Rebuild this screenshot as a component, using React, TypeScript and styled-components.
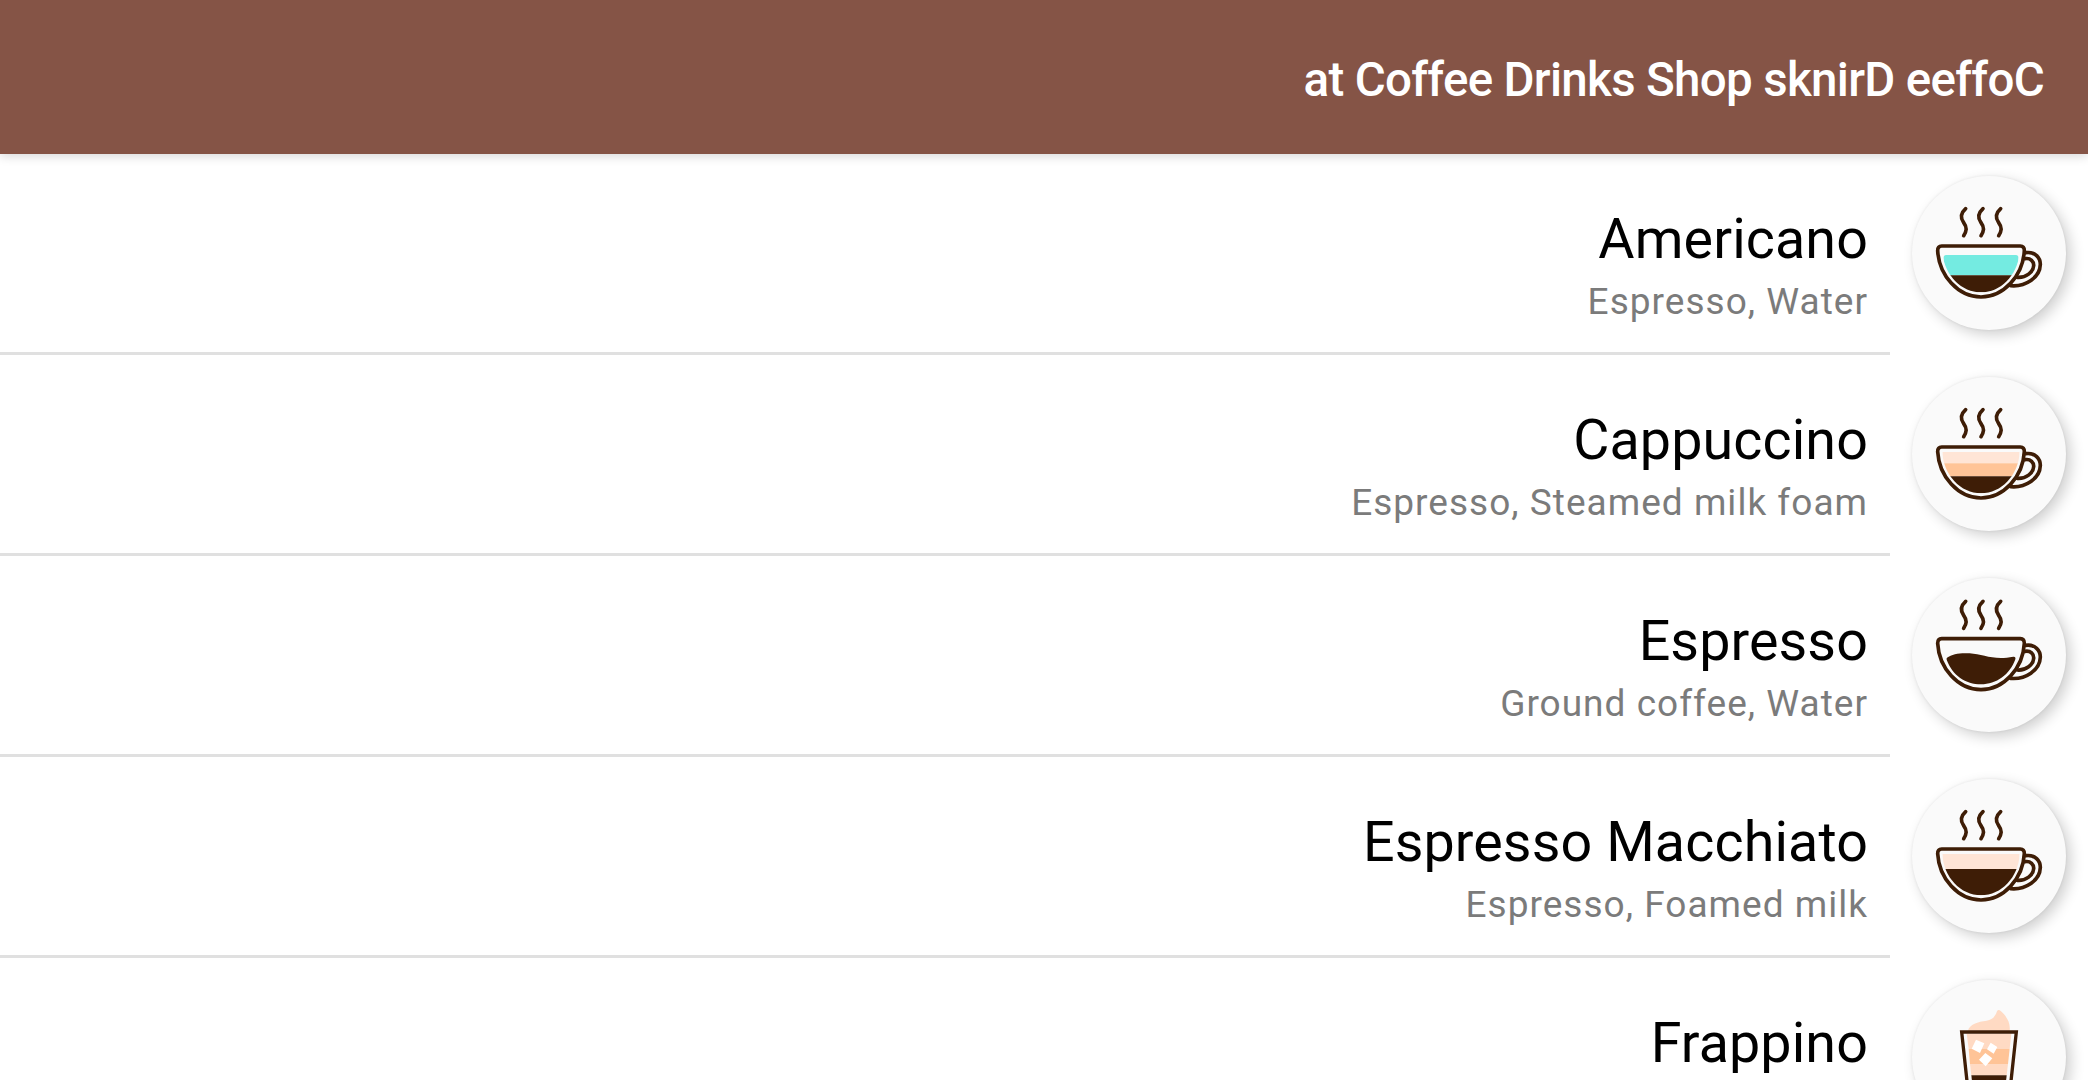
import React, { useId } from "react";
import styled, { createGlobalStyle } from "styled-components";

const GlobalStyle = createGlobalStyle`
  * { box-sizing: border-box; }
  html, body { height: 100%; }
  body {
    margin: 0;
    background: #ffffff;
    font-family: Roboto, "Noto Sans", sans-serif;
    overflow: hidden;
  }
`;

const Screen = styled.div`
  display: flex;
  flex-direction: column;
  height: 100vh;
  overflow: hidden;
`;

const AppBar = styled.header`
  position: relative;
  z-index: 1;
  flex: none;
  display: flex;
  justify-content: flex-end;
  height: 154px;
  padding: 52px 44px 0 0;
  background: #855446;
  box-shadow: 0 2px 10px rgba(0, 0, 0, 0.16);
`;

const AppTitle = styled.h1`
  margin: 0;
  font-size: 47.5px;
  line-height: 56px;
  font-weight: 500;
  letter-spacing: -0.69px;
  white-space: nowrap;
  color: #ffffff;
`;

const List = styled.ul`
  flex: none;
  margin: 0;
  padding: 0;
  list-style: none;
`;

const Item = styled.li`
  display: flex;
  height: 201px;
`;

const Details = styled.div`
  flex: 1;
  padding: 53px 22px 0 0;
  border-bottom: 3px solid #e0e0e0;
  text-align: right;
  white-space: nowrap;
`;

const Name = styled.div`
  font-size: 55.6px;
  line-height: 64px;
  letter-spacing: 0.12px;
  color: #000000;
`;

const Ingredients = styled.div`
  margin-top: 10px;
  font-size: 37px;
  line-height: 42px;
  letter-spacing: 1.02px;
  color: #7b7b7b;
`;

const Leading = styled.div`
  flex: none;
  width: 198px;
  padding: 22px;
`;

const Avatar = styled.div`
  width: 154px;
  height: 154px;
  border-radius: 50%;
  background: #fafafa;
  box-shadow: 5px 5px 14px rgba(0, 0, 0, 0.19), 0 0 3px rgba(0, 0, 0, 0.08);
`;

const Drawing = styled.svg`
  display: block;
  width: 100%;
  height: 100%;
  border-radius: 50%;
`;

const INK = "#3e1d06";
const MILK = "#ffe5d6";
const FOAM = "#ffc497";
const CREAM = "#ffdac3";
const WATER = "#74ebe1";

type Kind = "americano" | "cappuccino" | "espresso" | "macchiato" | "frappino";

const steam = "M233 176C214 193 219 207 227 218C238 233 236 243 227 257";

function Cup({ kind }: { kind: Kind }) {
  const clip = useId();
  return (
    <Drawing viewBox="72 78 462 462">
      <defs>
        <clipPath id={clip}>
          <path d="M163 303H395C392 372 340 427 279 427C218 427 166 372 163 303Z" />
        </clipPath>
      </defs>
      <g transform={kind === "espresso" ? "translate(0 -28)" : undefined}>
        <g fill="none" stroke={INK} strokeWidth="11" strokeLinecap="round" strokeLinejoin="round">
          <path d={steam} />
          <path d={steam} transform="translate(52 0)" />
          <path d={steam} transform="translate(105 0)" />
          <path d="M161 288H397Q409 288 409 302C405 376 348 441 279 441C210 441 153 376 149 302Q149 288 161 288Z" />
          <path d="M413 308C442 304 457 324 457 343C456 383 412 411 368 407" />
          <path d="M411 326C428 323 438 335 437 347C436 366 414 384 388 382" />
        </g>
        <g clipPath={`url(#${clip})`}>
          {kind === "americano" && (
            <>
              <path d="M174 315H384Q391 315 391 323V376H167V323Q167 315 174 315Z" fill={WATER} />
              <path d="M150 376H410V440H150Z" fill={INK} />
            </>
          )}
          {kind === "cappuccino" && (
            <>
              <path d="M150 303H410V337H150Z" fill={MILK} />
              <path d="M150 337H410V376H150Z" fill={FOAM} />
              <path d="M150 376H410V440H150Z" fill={INK} />
            </>
          )}
          {kind === "macchiato" && (
            <>
              <path d="M150 303H410V349H150Z" fill={MILK} />
              <path d="M150 348H410V440H150Z" fill={INK} />
            </>
          )}
        </g>
        {kind === "espresso" && (
          <path
            d="M177 345C193 333 219 330 245 332C285 335 318 354 376 342Q384 341 382 350C366 396 325 425 279 425C233 425 193 398 176 351Q175 347 177 345Z"
            fill={INK}
          />
        )}
      </g>
    </Drawing>
  );
}

function Glass() {
  return (
    <Drawing viewBox="72 78 462 462">
      <path d="M240 230C244 211 270 203 296 200C313 197 322 188 327 172Q331 164 339 172C354 186 368 204 365 230Z" fill={CREAM} />
      <path d="M236 239H370L365 284H242Z" fill={CREAM} />
      <path d="M242 284H365L360 330H246Z" fill={FOAM} />
      <path d="M246 330H360L356 364H250Z" fill={CREAM} />
      <path d="M250 364H356L345 464H262Z" fill={INK} />
      <path d="M264 257L289 268L276 297L251 284ZM308 266L328 279L317 299L297 286ZM292 297L313 313L293 337L273 317Z" fill="#ffffff" />
      <path d="M221 234H385L359 474H247Z" fill="none" stroke={INK} strokeWidth="10" strokeLinejoin="miter" />
    </Drawing>
  );
}

const drinks: { name: string; ingredients: string; kind: Kind }[] = [
  { name: "Americano", ingredients: "Espresso, Water", kind: "americano" },
  { name: "Cappuccino", ingredients: "Espresso, Steamed milk foam", kind: "cappuccino" },
  { name: "Espresso", ingredients: "Ground coffee, Water", kind: "espresso" },
  { name: "Espresso Macchiato", ingredients: "Espresso, Foamed milk", kind: "macchiato" },
  { name: "Frappino", ingredients: "", kind: "frappino" },
];

export default function App() {
  return (
    <>
      <GlobalStyle />
      <Screen>
        <AppBar>
          <AppTitle>at Coffee Drinks Shop sknirD eeffoC</AppTitle>
        </AppBar>
        <List>
          {drinks.map((drink) => (
            <Item key={drink.name}>
              <Details>
                <Name>{drink.name}</Name>
                <Ingredients>{drink.ingredients}</Ingredients>
              </Details>
              <Leading>
                <Avatar>{drink.kind === "frappino" ? <Glass /> : <Cup kind={drink.kind} />}</Avatar>
              </Leading>
            </Item>
          ))}
        </List>
      </Screen>
    </>
  );
}
